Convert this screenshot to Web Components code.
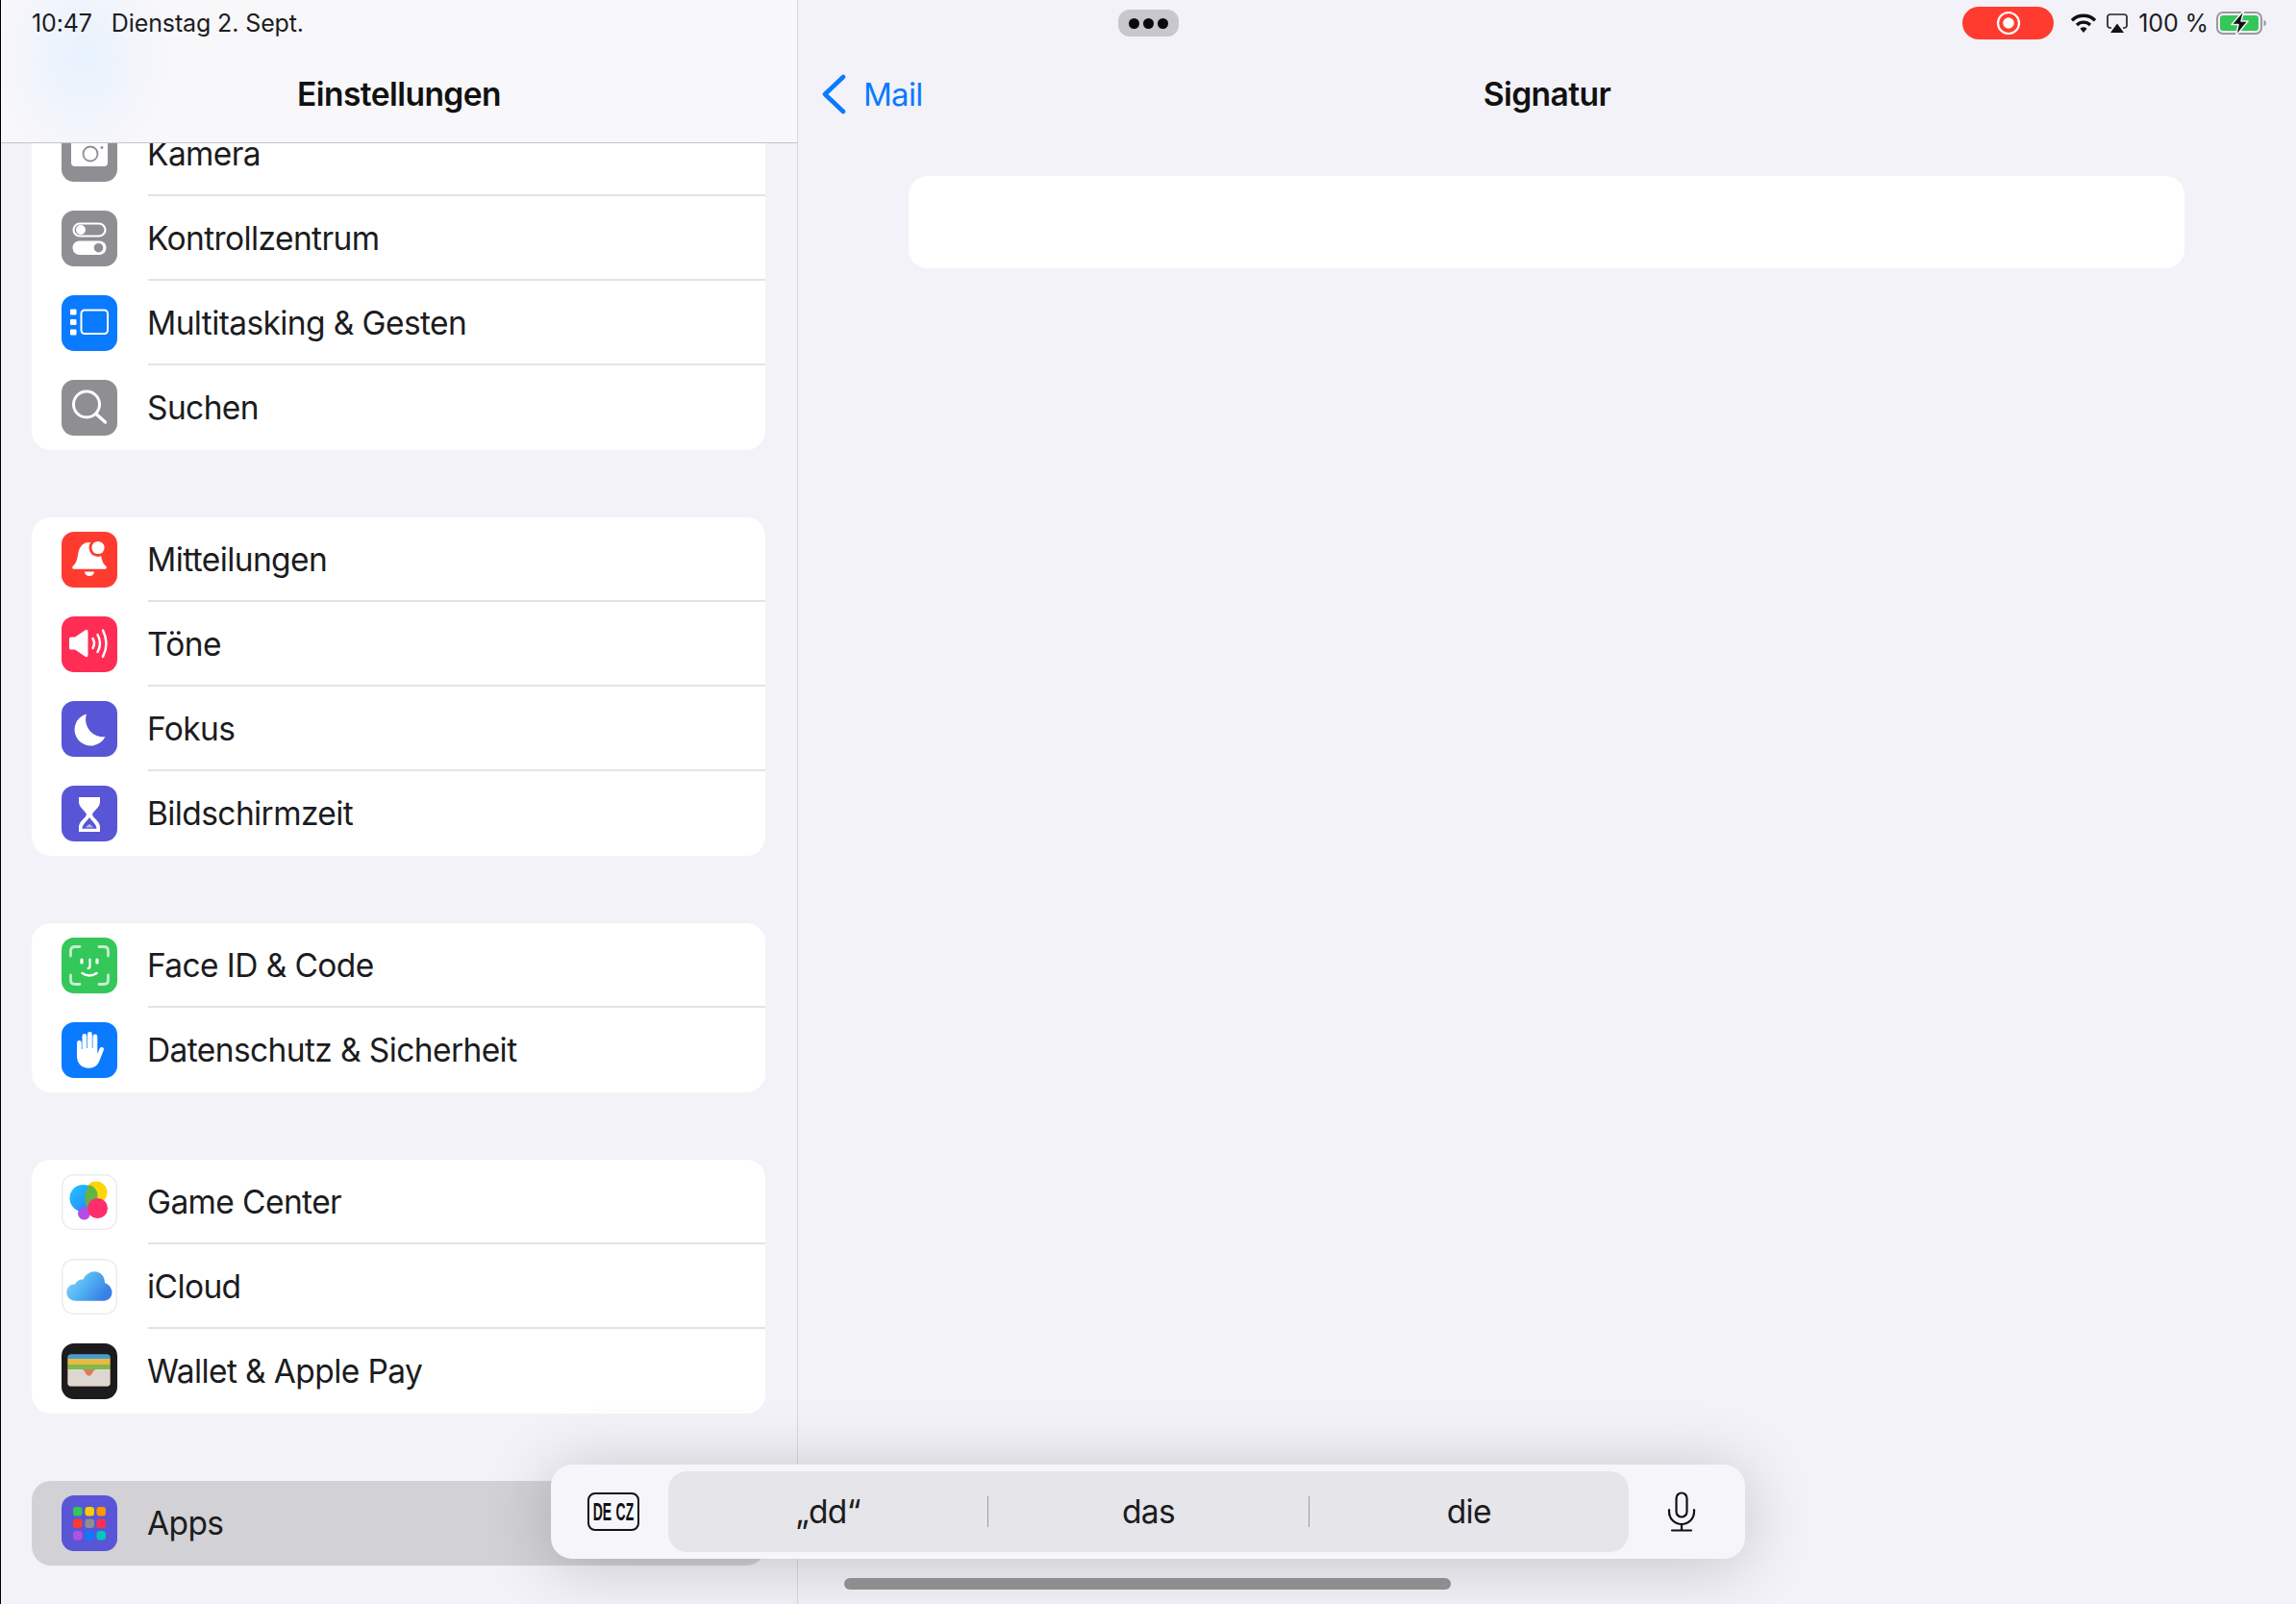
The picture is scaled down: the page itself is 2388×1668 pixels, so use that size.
<!doctype html>
<html lang="de"><head><meta charset="utf-8"><title>Einstellungen – Signatur</title>
<style>
html,body{margin:0;padding:0;width:2388px;height:1668px;overflow:hidden;background:#f3f2f8}
body{font-family:Inter,"Noto Sans",sans-serif;color:#1c1c1e}
</style></head><body>
<ipad-screen>
  <settings-sidebar slot="side">
    <settings-group>
      <settings-row icon="camera">Kamera</settings-row>
      <settings-row icon="control">Kontrollzentrum</settings-row>
      <settings-row icon="multi">Multitasking &amp; Gesten</settings-row>
      <settings-row icon="search" last>Suchen</settings-row>
    </settings-group>
    <settings-group>
      <settings-row icon="bell">Mitteilungen</settings-row>
      <settings-row icon="sound">Töne</settings-row>
      <settings-row icon="moon">Fokus</settings-row>
      <settings-row icon="hourglass" last>Bildschirmzeit</settings-row>
    </settings-group>
    <settings-group>
      <settings-row icon="face">Face ID &amp; Code</settings-row>
      <settings-row icon="hand" last>Datenschutz &amp; Sicherheit</settings-row>
    </settings-group>
    <settings-group>
      <settings-row icon="game">Game Center</settings-row>
      <settings-row icon="cloud">iCloud</settings-row>
      <settings-row icon="wallet" last>Wallet &amp; Apple Pay</settings-row>
    </settings-group>
    <settings-group>
      <settings-row icon="apps" last selected>Apps</settings-row>
    </settings-group>
  </settings-sidebar>
  <signature-pane slot="main"></signature-pane>
  <keyboard-bar slot="over"></keyboard-bar>
</ipad-screen>
<script>
const ICONS={
camera:['#8e8e93',`<rect x="10" y="13" width="38" height="29" rx="4" fill="#fff"/><circle cx="30" cy="29" r="7.5" fill="none" stroke="#8e8e93" stroke-width="1.8"/><circle cx="42" cy="22.5" r="1.4" fill="#8e8e93"/>`],
control:['#8e8e93',`<rect x="12.5" y="13.5" width="33" height="13" rx="6.5" fill="none" stroke="#fff" stroke-width="2.2"/><circle cx="20" cy="20" r="5" fill="#fff"/><rect x="11.5" y="31.5" width="35" height="14.5" rx="7.2" fill="#fff"/><circle cx="38.5" cy="38.7" r="4.8" fill="#8e8e93"/>`],
multi:['#0a7aff',`<rect x="9" y="14.5" width="6.5" height="6" rx="1" fill="#fff"/><rect x="9" y="25" width="6.5" height="6" rx="1" fill="#fff"/><rect x="9" y="35.5" width="6.5" height="6" rx="1" fill="#fff"/><rect x="20.5" y="15.5" width="27.5" height="24.5" rx="3.5" fill="none" stroke="#fff" stroke-width="2"/>`],
search:['#8e8e93',`<circle cx="26" cy="25.5" r="13.5" fill="none" stroke="#fff" stroke-width="3"/><path d="M36 35.5 45.5 44" fill="none" stroke="#fff" stroke-width="3.4" stroke-linecap="round"/>`],
bell:['#ff3b30',`<path d="M29 11C21 11 18 17 17 24C16 31 14 34 11.5 36Q10.5 38.7 13 38.7H45Q47.5 38.7 46.5 36C44 34 42 31 41 24C40 17 37 11 29 11Z" fill="#fff"/><path d="M24 41.5H34A5 4.5 0 0 1 24 41.5Z" fill="#fff"/><circle cx="38" cy="16.5" r="9.5" fill="#ff3b30"/><circle cx="38" cy="16.5" r="6.6" fill="#fff"/>`],
sound:['#ff2d55',`<path d="M8 23Q8 21.5 10 21.5H14L25 14Q27.5 13 27.5 16V40Q27.5 43 25 42L14 34.5H10Q8 34.5 8 33Z" fill="#fff"/><g fill="none" stroke="#fff" stroke-width="2.5" stroke-linecap="round"><path d="M32.5 23Q35.5 28 32.5 33"/><path d="M37.5 19Q42.5 28 37.5 37"/><path d="M43 14.5Q50 28 43 42"/></g>`],
moon:['#5856d6',`<path d="M26 13.5A16.8 16.8 0 1 0 45.5 37A18 18 0 0 1 26 13.5Z" fill="#fff"/>`],
hourglass:['#5856d6',`<path d="M18 12H40V17C40 23 33 26 32 30C33 34 40 37 40 43V48H18V43C18 37 25 34 26 30C25 26 18 23 18 17Z" fill="#fff"/><path d="M21.5 44.8H36.5C36.5 40 31 36.5 29 33C27 36.5 21.5 40 21.5 44.8Z" fill="#5856d6"/><path d="M25 43.5H33Q31 40.5 29 40Q27 40.5 25 43.5Z" fill="#fff" opacity=".55"/>`],
face:['#34c759',`<g fill="none" stroke="#fff" stroke-opacity=".72" stroke-width="2.8" stroke-linecap="round"><path d="M9.5 19V14Q9.5 9.5 14 9.5H19"/><path d="M39 9.5H44Q48.5 9.5 48.5 14V19"/><path d="M9.5 39V44Q9.5 48.5 14 48.5H19"/><path d="M48.5 39V44Q48.5 48.5 44 48.5H39"/></g><g fill="none" stroke="#fff" stroke-width="3.2" stroke-linecap="round"><path d="M21 23v3"/><path d="M37 23v3"/><path d="M29.5 22.5V30Q29.5 32 27.5 32" stroke-width="2.2"/><path d="M21.5 37Q29 42 36.5 37" stroke-width="2.6"/></g>`],
hand:['#0a7aff',`<path d="M16 21.5a2.4 2.4 0 0 1 4.8 0V28h.7V14.5a2.4 2.4 0 0 1 4.8 0V27h.7V12.5a2.4 2.4 0 0 1 4.8 0V27h.7V15a2.4 2.4 0 0 1 4.8 0V33l2.300-5.500c1.200-2.800 5.300-1.500 4.300 1.300L39.500 40C37.500 45 34 47.700 28.500 47.700C20.500 47.700 16 42.500 16 35Z" fill="#fff"/>`],
game:['#fff',`<defs><linearGradient id="gcb" x1="0" y1="0" x2="1" y2="1"><stop offset="0" stop-color="#1fc8ff"/><stop offset="1" stop-color="#2a7bff"/></linearGradient></defs><circle cx="36" cy="19" r="11.500" fill="#ffd60a"/><circle cx="22.500" cy="25" r="14" fill="url(#gcb)"/><path d="M30 11.500A11.500 11.500 0 0 1 36 28A11 11 0 0 0 28 35C23 33 23 15 30 11.500Z" fill="#63b445"/><circle cx="23.500" cy="41" r="6.500" fill="#b54de8"/><circle cx="37.500" cy="35.500" r="10.500" fill="#ff2d6c"/>`,true],
cloud:['#fff',`<defs><linearGradient id="clg" x1="0" y1="0" x2="1" y2=".5"><stop offset="0" stop-color="#8fdcfb"/><stop offset=".55" stop-color="#4fb0f2"/><stop offset="1" stop-color="#3a7fe6"/></linearGradient></defs><path d="M15 43.700C9 43.700 5.300 39.500 5.300 35C5.300 29.500 10 26 14 26.500C16 22.500 19.500 21 22.500 21.500C25 16 30 13.300 34 13.300C41 13.300 45 19 45 25C49.500 26.500 52.500 31 52.500 35C52.500 40 48.500 43.700 44 43.700Z" fill="url(#clg)"/>`,true],
wallet:['#1c1c1e',`<rect x="6.5" y="11.5" width="44" height="33" rx="3" fill="#e8735c"/><path d="M6.5 14.5a3 3 0 0 1 3-3h38a3 3 0 0 1 3 3V16h-44Z" fill="#3e9ed8"/><rect x="6.5" y="16" width="44" height="6" fill="#eab93d"/><rect x="6.5" y="22" width="44" height="5.5" fill="#7fb94b"/><path d="M6.5 27H21Q23 27 24 29Q26 33.8 28.5 33.8Q31 33.8 33 29Q34 27 36 27H50.5V41.500a3 3 0 0 1-3 3h-38a3 3 0 0 1-3-3Z" fill="#dcd8cf"/>`],
apps:['#5856d6',`<rect x="12" y="12" width="9.5" height="9.5" rx="3" fill="#34c759"/><rect x="24.5" y="12" width="9.5" height="9.5" rx="3" fill="#ffcc00"/><rect x="36.5" y="12" width="9.5" height="9.5" rx="3" fill="#ff9500"/><rect x="12" y="24.5" width="9.5" height="9.5" rx="3" fill="#ff3b30"/><rect x="24.5" y="24.5" width="9.5" height="9.5" rx="3" fill="#8e8e93"/><rect x="36.5" y="24.5" width="9.5" height="9.5" rx="3" fill="#ff2d55"/><rect x="12" y="37" width="9.5" height="9.5" rx="3" fill="#af52de"/><rect x="24.5" y="37" width="9.5" height="9.5" rx="3" fill="#0a7aff"/><rect x="36.5" y="37" width="9.5" height="9.5" rx="3" fill="#00c7be"/>`]
};
const def=(n,html,extra)=>customElements.define(n,class extends HTMLElement{
  constructor(){super();this.attachShadow({mode:'open'}).innerHTML=html;}
  connectedCallback(){extra&&extra(this)}
});
def('ipad-screen',`<style>
:host{display:grid;grid-template-columns:829px 1fr;width:2388px;height:1668px;position:relative;overflow:hidden;background:#f3f2f8;box-sizing:border-box;border-left:1px solid #000}
.dots{position:absolute;left:1162px;top:10px;width:63px;height:28px;border-radius:12px;background:#c7c7cc;display:flex;justify-content:center;align-items:center;gap:4px}
.dots i{width:11px;height:11px;border-radius:50%;background:#0a0a0a}
.home{position:absolute;left:877px;top:1641px;width:631px;height:12px;border-radius:6px;background:#8e8e8e}
</style><slot name="side"></slot><slot name="main"></slot><div class="dots"><i></i><i></i><i></i></div><slot name="over"></slot><div class="home"></div>`);
def('settings-sidebar',`<style>
:host{display:flex;flex-direction:column;height:1668px;box-sizing:border-box;border-right:1px solid #d9d9de;overflow:hidden;background:#f3f2f8}
header{flex:none;height:148px;box-sizing:content-box;border-bottom:1px solid #c4c4c8;background:radial-gradient(ellipse 90px 110px at 85px 60px,rgba(226,240,255,.75),rgba(226,240,255,0)),#f8f7fa;display:flex;flex-direction:column;position:relative;z-index:1}
.st{height:48px;display:flex;align-items:center;padding-left:32px;gap:20px;font-size:25px;letter-spacing:-.12px;color:#1c1c1e}
.t{height:100px;display:flex;align-items:center;justify-content:center;font-size:33.5px;font-weight:600;letter-spacing:-.55px;color:#111}
.list{flex:1;min-height:0;overflow:hidden}
.in{margin-top:-33px;padding:0 33px 0 32px;display:flex;flex-direction:column;gap:70px}
</style><header><div class="st"><span>10:47</span><span>Dienstag 2. Sept.</span></div><div class="t">Einstellungen</div></header><div class="list"><div class="in"><slot></slot></div></div>`);
def('settings-group',`<style>:host{display:block;background:#fff;border-radius:20px;overflow:hidden}</style><slot></slot>`);
def('settings-row',`<style>
:host{display:flex;align-items:center;height:88px;padding-left:31px;box-sizing:border-box;position:relative;font-size:33.5px;letter-spacing:-.6px;color:#1c1c1e}
:host([selected]){background:#d1d1d6}
.ic{flex:none;width:58px;height:58px;margin-right:31px;display:block;border-radius:13px;overflow:hidden;box-sizing:border-box}
.ic svg{display:block;width:58px;height:58px}
.sep{position:absolute;left:121px;right:0;bottom:0;height:2px;background:#e3e3e7}
:host([last]) .sep{display:none}
</style><span class="ic"></span><slot></slot><div class="sep"></div>`,el=>{
  const [bg,svg,bd]=ICONS[el.getAttribute('icon')];
  const ic=el.shadowRoot.querySelector('.ic');
  ic.style.background=bg; if(bd) ic.style.boxShadow='inset 0 0 0 1.5px #ececf0';
  ic.innerHTML=`<svg viewBox="0 0 58 58" aria-hidden="true">${svg}</svg>`;
});
def('status-icons',`<style>
:host{display:flex;align-items:center;height:48px;justify-content:flex-end;padding-right:30px}
.rec{width:95px;height:34px;border-radius:17px;background:#ff3b30;display:flex;align-items:center;justify-content:center;margin-right:17px}
svg{display:block}
.pct{font-size:25px;letter-spacing:-.1px;color:#1c1c1e;margin:0 8px 0 11px}
</style>
<div class="rec"><svg width="26" height="26" viewBox="0 0 26 26"><circle cx="13" cy="13" r="11" fill="none" stroke="#fff" stroke-width="2.2"/><circle cx="13" cy="13" r="5.8" fill="#fff"/></svg></div>
<svg width="28" height="22" viewBox="0 0 28 22"><g fill="none" stroke="#111" stroke-width="3.4"><path d="M2 8.2A17 17 0 0 1 26 8.2"/><path d="M7 13A10 10 0 0 1 21 13"/></g><path d="M10.5 16.8A5 5 0 0 1 17.5 16.8L14 21Z" fill="#111"/></svg>
<svg width="22" height="21" viewBox="0 0 22 21" style="margin-left:10px"><path d="M5 15H3.500A2.500 2.500 0 0 1 1 12.500V3.500A2.500 2.500 0 0 1 3.500 1H18.500A2.500 2.500 0 0 1 21 3.500V12.500A2.500 2.500 0 0 1 18.500 15H17" fill="none" stroke="#222" stroke-width="1.7"/><path d="M11 10.500L18 20H4Z" fill="#111"/></svg>
<span class="pct">100 %</span>
<svg width="53" height="28" viewBox="0 0 53 28"><rect x="1" y="3" width="46" height="22" rx="6" fill="none" stroke="#9a9a9e" stroke-width="2"/><rect x="4" y="6" width="40" height="16" rx="3" fill="#34c759"/><path d="M49.500 10.500Q52 11.500 52 14Q52 16.500 49.500 17.500Z" fill="#9a9a9e"/><path d="M29 .5L16 15.500H23L20.500 27.500L33 12H26Z" fill="#111" stroke="#f3f2f8" stroke-width="1.5" stroke-linejoin="round"/></svg>`);
def('signature-pane',`<style>
:host{display:flex;flex-direction:column;height:1668px;background:#f3f2f8;min-width:0}
nav{height:100px;display:grid;grid-template-columns:1fr auto 1fr;align-items:center;padding:0 24px;flex:none}
.b{display:flex;align-items:center;gap:17px;color:#0a7aff;font-size:33px;letter-spacing:-.7px}
svg{display:block}
.t{font-size:33.5px;font-weight:600;letter-spacing:-.55px;color:#111}
.box{flex:none;height:96px;background:#fff;border-radius:20px;margin:35px 116px 0 115px}
</style><status-icons></status-icons><nav><div class="b"><svg width="27" height="42" viewBox="0 0 27 42"><path d="M23 3 4 21 23 39" fill="none" stroke="#0a7aff" stroke-width="4.6" stroke-linecap="round" stroke-linejoin="round"/></svg><span>Mail</span></div><div class="t">Signatur</div><div></div></nav><div class="box"></div>`);
def('keyboard-bar',`<style>
:host{position:absolute;left:572px;top:1523px;width:1242px;height:98px;box-sizing:border-box;background:#f6f5fa;border-radius:22px;box-shadow:0 6px 70px rgba(0,0,0,.2);display:flex;align-items:stretch;padding:7px 0}
.l{flex:none;width:122px;display:flex;align-items:center;justify-content:center}
.lang{width:54px;height:40px;margin-left:8px;box-sizing:border-box;border:2.5px solid #111;border-radius:8px;display:flex;align-items:center;justify-content:center;font:700 25px/1 "Liberation Sans",sans-serif;color:#111;white-space:nowrap}
.lang span{display:inline-block;transform:scaleX(.56);word-spacing:1px}
.c{flex:1;display:flex;background:#e5e5ea;border-radius:20px;align-items:center}
.c div{flex:1;height:32px;display:flex;align-items:center;justify-content:center;font-size:33.5px;letter-spacing:-.6px;color:#1c1c1e;position:relative}
.c div+div{border-left:1.5px solid #9c9ca0}
.m{flex:none;width:121px;display:flex;align-items:center;justify-content:center;padding-right:12px;box-sizing:border-box}
svg{display:block}
</style><div class="l"><div class="lang"><span>DE CZ</span></div></div><div class="c"><div>„dd“</div><div>das</div><div>die</div></div><div class="m"><svg width="30" height="42" viewBox="0 0 30 42" fill="none" stroke="#111" stroke-width="2.2" stroke-linecap="round"><rect x="9.5" y="1.5" width="11" height="25" rx="5.5"/><path d="M2 19V21A13 13 0 0 0 28 21V19"/><path d="M15 34V40"/><path d="M5 40.5H25"/></svg></div>`);
</script>
</body></html>
